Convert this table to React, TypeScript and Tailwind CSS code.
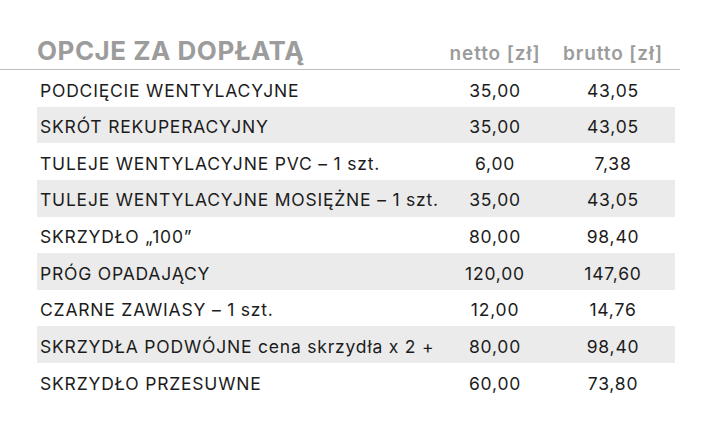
const rows: [string, string, string][] = [
  ['PODCIĘCIE WENTYLACYJNE', '35,00', '43,05'],
  ['SKRÓT REKUPERACYJNY', '35,00', '43,05'],
  ['TULEJE WENTYLACYJNE PVC – 1 szt.', '6,00', '7,38'],
  ['TULEJE WENTYLACYJNE MOSIĘŻNE – 1 szt.', '35,00', '43,05'],
  ['SKRZYDŁO „100”', '80,00', '98,40'],
  ['PRÓG OPADAJĄCY', '120,00', '147,60'],
  ['CZARNE ZAWIASY – 1 szt.', '12,00', '14,76'],
  ['SKRZYDŁA PODWÓJNE cena skrzydła x 2 +', '80,00', '98,40'],
  ['SKRZYDŁO PRZESUWNE', '60,00', '73,80'],
];

export default function App() {
  return (
    <div className="h-[422px] w-[708px] bg-white font-['Inter',sans-serif]">
      {/* Header */}
      <div className="flex h-[70px] w-[680px] items-end border-b border-[#bdbdbd] pb-[5px] text-[#9c9c9c]">
        <div className="w-[437px] pl-[37px] text-[26px] font-bold leading-none tracking-[0.5px]">OPCJE ZA DOPŁATĄ</div>
        <div className="w-[116px] pb-[1px] text-center text-[19px] font-semibold leading-none tracking-[0.9px]">netto [zł]</div>
        <div className="w-[120px] pb-[1px] text-center text-[19px] font-semibold leading-none tracking-[0.9px]">brutto [zł]</div>
      </div>

      {/* Rows */}
      <div className="ml-[37px] w-[638px]">
        {rows.map(([name, netto, brutto], i) => (
          <div
            key={name}
            className={`flex h-[36.65px] items-center pt-[4px] text-[17.5px] leading-none tracking-[0.8px] text-[#1c1c1c] ${i % 2 === 1 ? 'bg-[#ebebeb]' : ''}`}
          >
            <div className="w-[400px] pl-[3px] whitespace-nowrap">{name}</div>
            <div className="w-[116px] text-center">{netto}</div>
            <div className="w-[120px] text-center">{brutto}</div>
          </div>
        ))}
      </div>
    </div>
  );
}
